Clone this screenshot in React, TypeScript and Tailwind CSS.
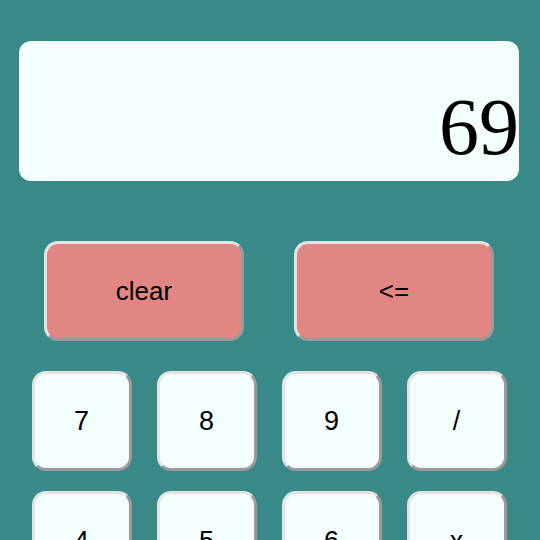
import React, { useState } from 'react';

const rows = [
    ['7', '8', '9', '/'],
    ['4', '5', '6', 'x'],
    ['1', '2', '3', '-'],
    ['0', '.', '=', '+'],
];

const keyBorder = 'border-[3px] border-t-[#e4e4e4] border-l-[#e4e4e4] border-b-[#9a9a9a] border-r-[#9a9a9a]';

export default function App() {
    const [display, setDisplay] = useState('69');

    const press = (k: string) => {
        if (k === '=') return;
        setDisplay(d => d + k);
    };

    return (
        <div className="min-h-[540px] w-full bg-[#3a8989] flex flex-col items-center pt-[41px] pb-10 pr-[2px]" style={{ fontFamily: '"Liberation Sans", Arial, sans-serif' }}>
            <div className="w-[500px] h-[140px] bg-[#f2fffe] rounded-[12px] flex items-end justify-end pb-[10px] overflow-visible">
                <span className="text-[80px] leading-[88px] text-black whitespace-nowrap" style={{ fontFamily: '"Liberation Serif", "Times New Roman", serif' }}>
                    {display}
                </span>
            </div>

            <div className="flex gap-[50px] mt-[60px]">
                <button onClick={() => setDisplay('')} className={`w-[200px] h-[100px] bg-[#e18683] rounded-[14px] text-[26px] text-black ${keyBorder}`}>
                    clear
                </button>
                <button onClick={() => setDisplay(d => d.slice(0, -1))} className={`w-[200px] h-[100px] bg-[#e18683] rounded-[14px] text-[26px] text-black ${keyBorder}`}>
                    &lt;=
                </button>
            </div>

            <div className="flex flex-col gap-[20px] mt-[30px]">
                {rows.map((row, i) => (
                    <div key={i} className="flex gap-[25px]">
                        {row.map(k => (
                            <button key={k} onClick={() => press(k)} className={`w-[100px] h-[100px] bg-[#f2fffe] rounded-[14px] text-[27px] text-black ${keyBorder}`}>
                                {k}
                            </button>
                        ))}
                    </div>
                ))}
            </div>
        </div>
    );
}
